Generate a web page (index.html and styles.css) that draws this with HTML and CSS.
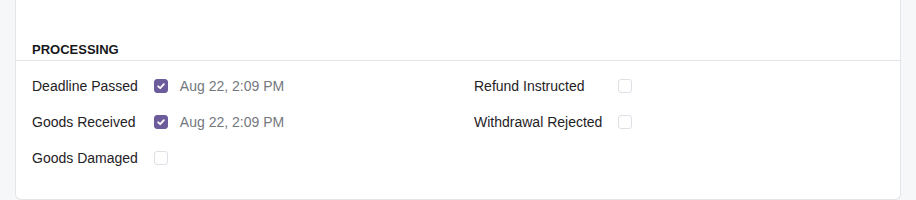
FILE: index.html
```html
<!DOCTYPE html>
<html lang="en">
<head>
    <meta charset="UTF-8">
    <meta name="viewport" content="width=device-width, initial-scale=1.0">
    <title>Return Status</title>
    <link rel="stylesheet" href="styles.css">
</head>
<body>
    <div class="card">
        <div class="section-head">
            <h3>Processing</h3>
        </div>
        <div class="section-body">
            <div class="status-list">
                <span class="label">Deadline Passed</span>
                <span class="check checked">
                    <svg viewBox="0 0 14 14" width="14" height="14"><polyline points="4.2,7.3 6.2,9.2 9.9,5.2" fill="none" stroke="#fff" stroke-width="1.8" stroke-linecap="round" stroke-linejoin="round"/></svg>
                </span>
                <span class="date">Aug 22, 2:09 PM</span>

                <span class="label">Goods Received</span>
                <span class="check checked">
                    <svg viewBox="0 0 14 14" width="14" height="14"><polyline points="4.2,7.3 6.2,9.2 9.9,5.2" fill="none" stroke="#fff" stroke-width="1.8" stroke-linecap="round" stroke-linejoin="round"/></svg>
                </span>
                <span class="date">Aug 22, 2:09 PM</span>

                <span class="label">Goods Damaged</span>
                <span class="check"></span>
                <span class="date"></span>
            </div>
            <div class="status-list">
                <span class="label">Refund Instructed</span>
                <span class="check"></span>
                <span class="date"></span>

                <span class="label">Withdrawal Rejected</span>
                <span class="check"></span>
                <span class="date"></span>
            </div>
        </div>
    </div>
</body>
</html>
```

FILE: styles.css
```css
body {
    margin: 0;
    padding: 0 15px;
    background-color: #f6f7f9;
    font-family: "Liberation Sans", Arial, sans-serif;
    color: #1f2226;
}
.card {
    background: #fff;
    border: 1px solid #e3e5e9;
    border-top: none;
    border-radius: 0 0 6px 6px;
    height: 200px;
    box-sizing: border-box;
}
.section-head {
    padding: 40px 16px 0;
    border-bottom: 1px solid #e3e5e9;
}
.section-head h3 {
    margin: 0;
    font-size: 13px;
    line-height: 20px;
    font-weight: bold;
    text-transform: uppercase;
    color: #16181b;
}
.section-body {
    display: grid;
    grid-template-columns: 1fr 1fr;
    column-gap: 32px;
    padding: 15px 16px 0;
}
.status-list {
    display: grid;
    grid-template-columns: max-content 14px auto;
    column-gap: 16px;
    row-gap: 16px;
    align-items: center;
    align-content: start;
    font-size: 14px;
    line-height: 20px;
}
.status-list .date {
    margin-left: -4px;
    color: #74787e;
}
.check {
    width: 14px;
    height: 14px;
    box-sizing: border-box;
    border: 1px solid #dfe0e6;
    border-radius: 3px;
    background: #fff;
}
.check.checked {
    background: #6d5c9c;
    border-color: #6d5c9c;
}
.check svg {
    display: block;
    margin: -1px;
}
```
